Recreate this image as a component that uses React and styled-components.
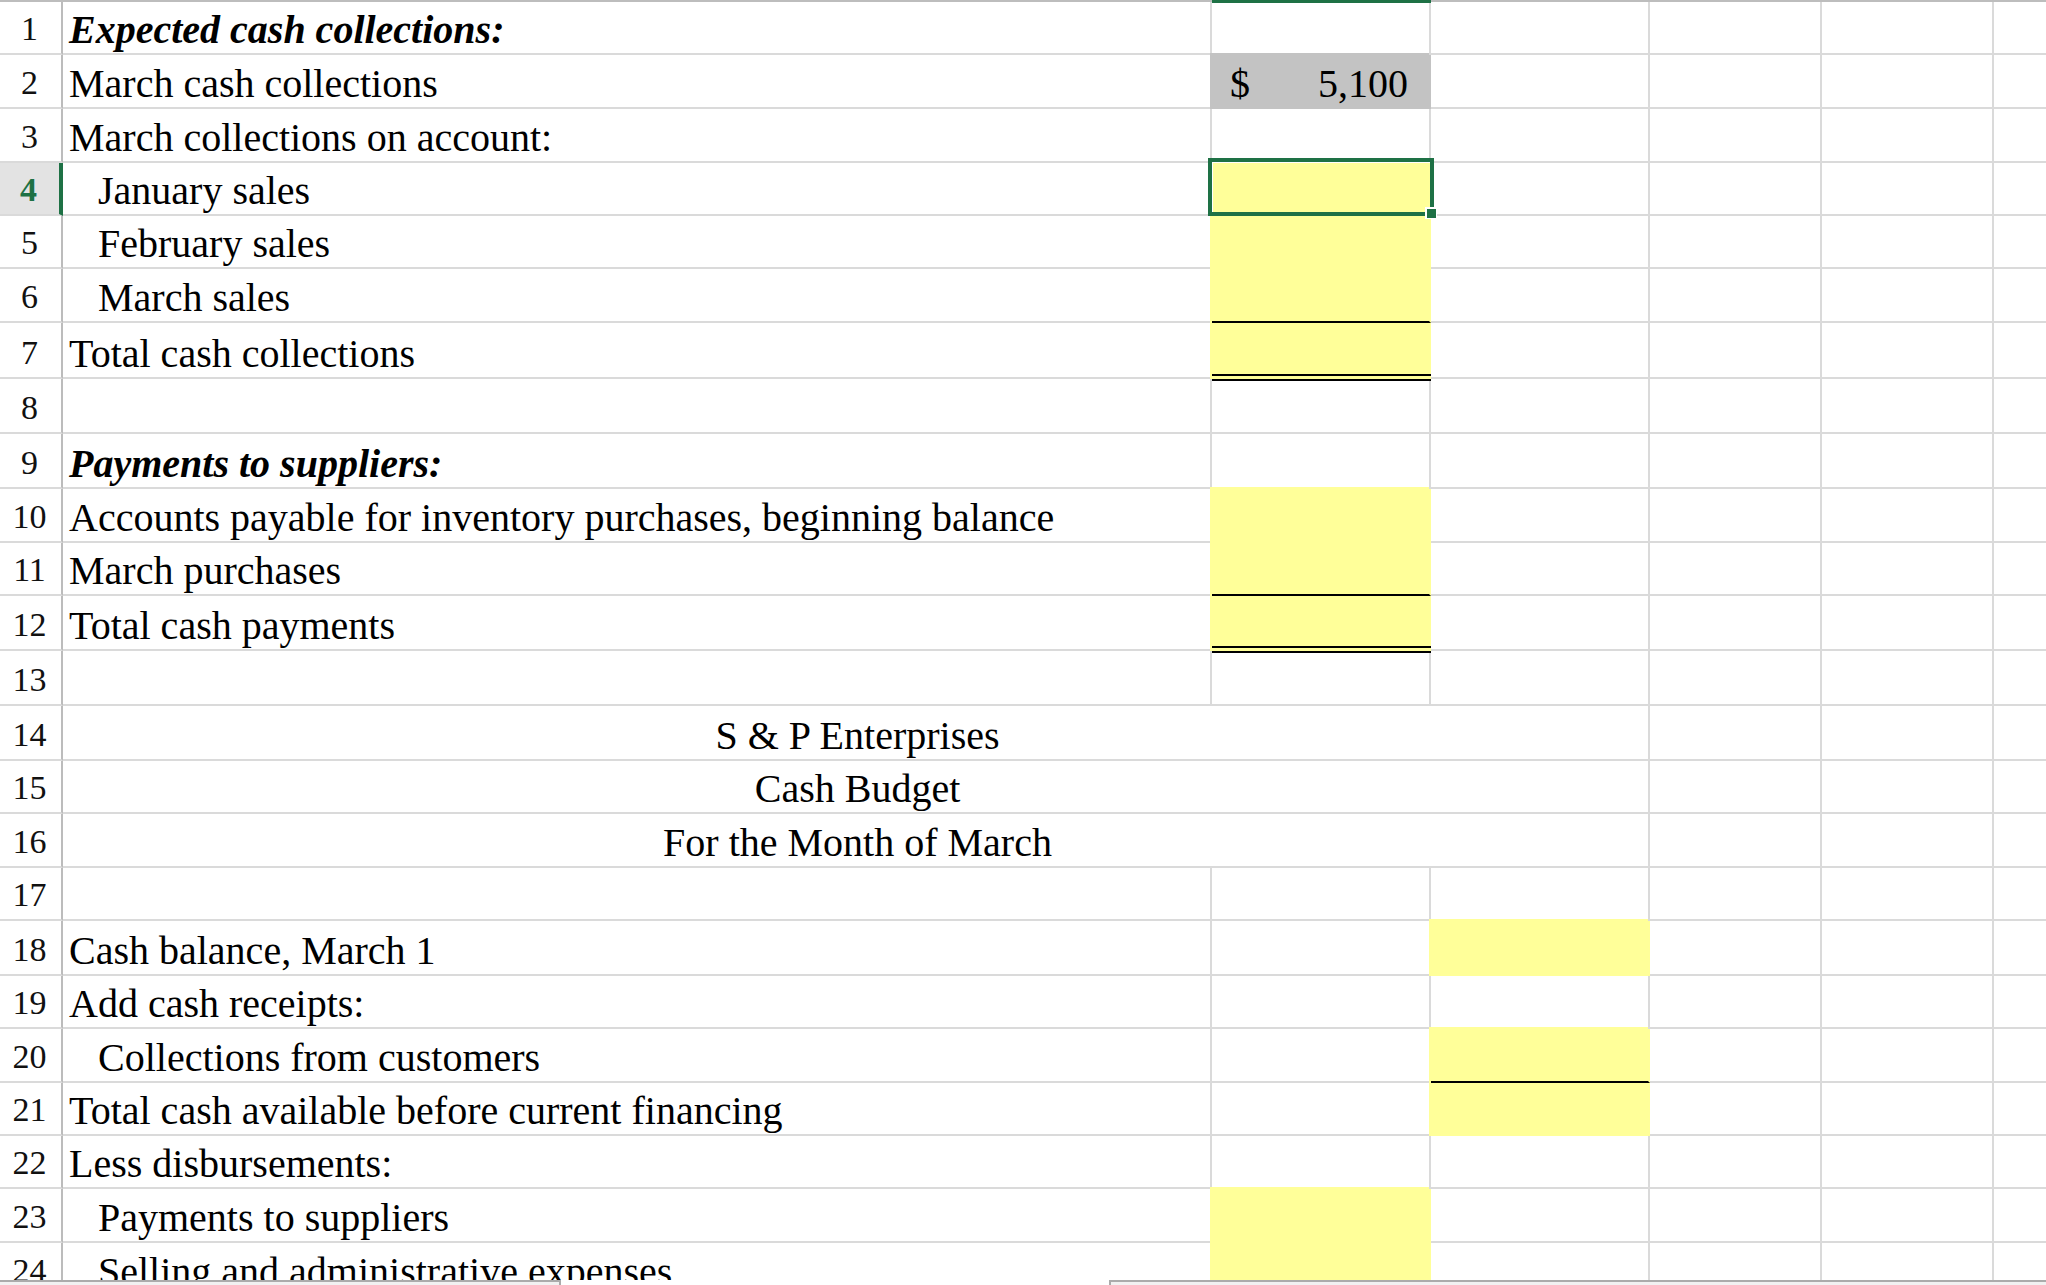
import React from 'react';
import styled, { createGlobalStyle, css } from 'styled-components';

const GRID = '#dadada';
const GREEN = '#1e7145';
const FILLS = { yellow: '#ffff99', gray: '#c3c3c3' };

const GlobalStyle = createGlobalStyle`
  html, body {
    margin: 0;
    padding: 0;
    width: 2046px;
    height: 1285px;
    overflow: hidden;
    background: #fff;
  }
  body {
    font-family: "Liberation Serif", "Times New Roman", serif;
    color: #000;
  }
`;

const ROW_HEIGHTS = [53, 54, 54, 53, 53, 54, 56, 55, 55, 54, 53, 55, 55, 55, 53, 54, 53, 55, 53, 54, 53, 53, 54, 54];

const Window = styled.div`
  display: flex;
  flex-direction: column;
  width: 2046px;
  height: 1285px;
  overflow: hidden;
`;

const Viewport = styled.div`
  flex: 1;
  min-height: 0;
  overflow: hidden;
`;

const Sheet = styled.div`
  display: grid;
  grid-template-columns: 63px 1149px 219px 219px 172px 172px 172px;
  grid-template-rows: 2px ${ROW_HEIGHTS.map((h) => `${h}px`).join(' ')};
  width: max-content;
`;

const EdgeCell = styled.div`
  background: ${(p) => (p.$active ? GREEN : '#bdbdbd')};
  ${(p) => p.$active && css`
    position: relative;
    z-index: 3;
    height: 3px;
  `}
`;

const RowHead = styled.div`
  box-sizing: border-box;
  display: flex;
  align-items: flex-end;
  justify-content: center;
  padding-right: 2px;
  padding-bottom: 1px;
  font-size: 34px;
  line-height: 46px;
  border-bottom: 2px solid ${GRID};
  border-right: ${(p) => (p.$active ? `4px solid ${GREEN}` : '2px solid #bcbcbc')};
  background: ${(p) => (p.$active ? '#e3e3e3' : '#fff')};
  color: ${(p) => (p.$active ? GREEN : '#111')};
  font-weight: ${(p) => (p.$active ? 700 : 400)};
`;

const TextCell = styled.div`
  box-sizing: border-box;
  display: flex;
  align-items: flex-end;
  min-width: 0;
  white-space: nowrap;
  font-size: 40px;
  line-height: 46px;
  background: #fff;
  border-right: 2px solid ${GRID};
  border-bottom: 2px solid ${GRID};
`;

const LabelCell = styled(TextCell)`
  padding-left: ${(p) => (p.$indent ? 35 : 6)}px;
  ${(p) => p.$head && css`
    font-weight: 700;
    font-style: italic;
  `}
`;

const TitleCell = styled(TextCell)`
  grid-column: span 3;
  justify-content: center;
  padding-left: 4px;
`;

const DataCell = styled(TextCell)`
  justify-content: space-between;
  padding: 0 21px 0 18px;
  ${(p) => p.$fill && css`
    background: ${FILLS[p.$fill]};
    border-right-color: ${FILLS[p.$fill]};
    border-bottom-color: ${FILLS[p.$fill]};
    box-shadow: -2px 0 0 ${FILLS[p.$fill]}${p.$top ? `, -2px -2px 0 ${FILLS[p.$fill]}` : ''};
  `}
  ${(p) => p.$rule === 'single' && css`
    border-bottom-color: #000;
  `}
  ${(p) => p.$rule === 'double' && css`
    position: relative;
    z-index: 1;
    &::after {
      content: '';
      position: absolute;
      left: 0;
      right: -2px;
      bottom: -4px;
      height: 7px;
      box-sizing: border-box;
      border-top: 2px solid #000;
      border-bottom: 2px solid #000;
    }
  `}
  ${(p) => p.$selected && css`
    position: relative;
    z-index: 2;
  `}
`;

const Selection = styled.div`
  position: absolute;
  top: -5px;
  left: -4px;
  right: -5px;
  bottom: -2px;
  border: 4px solid ${GREEN};
  box-shadow: inset 1px 1px 0 #fff;
  pointer-events: none;
`;

const FillHandle = styled.div`
  position: absolute;
  right: -7px;
  bottom: -7px;
  width: 9px;
  height: 9px;
  background: ${GREEN};
  border: 2px solid #fff;
  border-right-width: 1px;
  border-bottom-width: 1px;
`;

const BottomBar = styled.div`
  flex: none;
  height: 5px;
  display: flex;
  background: #fff;
`;

const BarSegment = styled.div`
  box-sizing: border-box;
  flex: none;
  width: ${(p) => p.$w}px;
  background: #f1f1f1;
  border-top: 2px solid #ababab;
  ${(p) => (p.$side === 'left'
    ? css`border-right: 2px solid #ababab;`
    : css`border-left: 2px solid #ababab;`)}
`;

const BarGap = styled.div`
  flex: 1;
`;

const ROWS = [
  { n: 1, label: 'Expected cash collections:', head: true },
  { n: 2, label: 'March cash collections', b: { fill: 'gray', top: true, money: ['$', '5,100'] } },
  { n: 3, label: 'March collections on account:' },
  { n: 4, label: 'January sales', indent: true, b: { fill: 'yellow', selected: true } },
  { n: 5, label: 'February sales', indent: true, b: { fill: 'yellow' } },
  { n: 6, label: 'March sales', indent: true, b: { fill: 'yellow', rule: 'single' } },
  { n: 7, label: 'Total cash collections', b: { fill: 'yellow', rule: 'double' } },
  { n: 8 },
  { n: 9, label: 'Payments to suppliers:', head: true },
  { n: 10, label: 'Accounts payable for inventory purchases, beginning balance', b: { fill: 'yellow', top: true } },
  { n: 11, label: 'March purchases', b: { fill: 'yellow', rule: 'single' } },
  { n: 12, label: 'Total cash payments', b: { fill: 'yellow', rule: 'double' } },
  { n: 13 },
  { n: 14, title: 'S & P Enterprises' },
  { n: 15, title: 'Cash Budget' },
  { n: 16, title: 'For the Month of March' },
  { n: 17 },
  { n: 18, label: 'Cash balance, March 1', c: { fill: 'yellow', top: true } },
  { n: 19, label: 'Add cash receipts:' },
  { n: 20, label: 'Collections from customers', indent: true, c: { fill: 'yellow', top: true, rule: 'single' } },
  { n: 21, label: 'Total cash available before current financing', c: { fill: 'yellow' } },
  { n: 22, label: 'Less disbursements:' },
  { n: 23, label: 'Payments to suppliers', indent: true, b: { fill: 'yellow', top: true } },
  { n: 24, label: 'Selling and administrative expenses', indent: true, b: { fill: 'yellow' } },
];

const EDGE_COLS = ['head', 'a', 'b', 'c', 'd', 'e', 'f'];

function Data({ spec }) {
  const s = spec || {};
  return (
    <DataCell $fill={s.fill} $rule={s.rule} $top={s.top} $selected={s.selected}>
      {s.money && (
        <>
          <span>{s.money[0]}</span>
          <span>{s.money[1]}</span>
        </>
      )}
      {s.selected && (
        <Selection>
          <FillHandle />
        </Selection>
      )}
    </DataCell>
  );
}

function SheetRow({ row }) {
  const cols = row.title ? ['d', 'e', 'f'] : ['b', 'c', 'd', 'e', 'f'];
  return (
    <>
      <RowHead $active={row.n === 4}>{row.n}</RowHead>
      {row.title ? (
        <TitleCell>{row.title}</TitleCell>
      ) : (
        <LabelCell $indent={row.indent} $head={row.head}>{row.label}</LabelCell>
      )}
      {cols.map((k) => (
        <Data key={k} spec={row[k]} />
      ))}
    </>
  );
}

export default function App() {
  return (
    <>
      <GlobalStyle />
      <Window>
        <Viewport>
          <Sheet>
            {EDGE_COLS.map((k) => (
              <EdgeCell key={k} $active={k === 'b'} />
            ))}
            {ROWS.map((row) => (
              <SheetRow key={row.n} row={row} />
            ))}
          </Sheet>
        </Viewport>
        <BottomBar>
          <BarSegment $w={561} $side="left" />
          <BarGap />
          <BarSegment $w={937} $side="right" />
        </BottomBar>
      </Window>
    </>
  );
}
